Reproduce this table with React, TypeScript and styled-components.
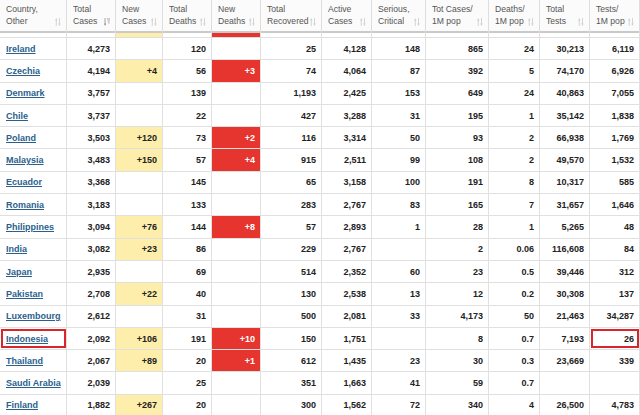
import React from "react";
import styled, { createGlobalStyle, css } from "styled-components";

const GlobalStyle = createGlobalStyle`
  html, body {
    margin: 0;
    padding: 0;
    background: #fff;
  }
  body {
    font-family: "Liberation Sans", Arial, sans-serif;
    overflow: hidden;
  }
`;

const COLUMNS = "67px 49px 47px 49px 49px 61px 50px 54px 63px 51px 50px 50px";

const Table = styled.div`
  width: 640px;
  height: 415px;
  overflow: hidden;
  display: flex;
  flex-direction: column;
`;

const HeaderRow = styled.div`
  display: grid;
  grid-template-columns: ${COLUMNS};
  height: 31px;
  background: #fbfbfb;
  border-bottom: 2px solid #c9c9c9;
  flex-shrink: 0;
`;

const HeaderCell = styled.div`
  display: flex;
  align-items: flex-end;
  justify-content: space-between;
  padding: 4px 5px 6px 6px;
  border-right: 1px solid #dedede;
  color: #555;
  font-size: 8.6px;
  line-height: 11.5px;
  box-sizing: border-box;
  min-width: 0;
`;

const HeaderText = styled.span`
  align-self: flex-start;
  white-space: pre-line;
`;

const SortIcon = styled.svg<{ $active?: boolean }>`
  width: 6px;
  height: 8px;
  flex-shrink: 0;
  margin-bottom: 1px;
  color: ${(p) => (p.$active ? "#9a9a9a" : "#d0d0d0")};
`;

const Row = styled.div<{ $short?: boolean }>`
  display: grid;
  grid-template-columns: ${COLUMNS};
  height: ${(p) => (p.$short ? "5px" : "22.3px")};
  border-bottom: 1px solid #e0e0e0;
  flex-shrink: 0;
  box-sizing: border-box;
`;

type Tone = "yellow" | "red" | undefined;

const Cell = styled.div<{ $tone?: Tone; $marked?: boolean }>`
  display: flex;
  align-items: center;
  justify-content: flex-end;
  padding-right: 5px;
  border-right: 1px solid #e0e0e0;
  font-size: 9px;
  font-weight: bold;
  color: #222;
  box-sizing: border-box;
  white-space: nowrap;
  min-width: 0;
  ${(p) =>
    p.$tone === "yellow" &&
    css`
      background: #feeeab;
    `}
  ${(p) =>
    p.$tone === "red" &&
    css`
      background: #e6352e;
      color: #fff;
    `}
  ${(p) =>
    p.$marked &&
    css`
      outline: 2px solid #d8262c;
      outline-offset: -3px;
    `}
`;

const CountryCell = styled(Cell)`
  justify-content: flex-start;
  padding: 0 0 0 6px;
`;

const CountryLink = styled.a`
  color: #2b5f8e;
  text-decoration: underline;
  font-weight: bold;
`;

const Arrows = ({ active }: { active?: boolean }) => (
  <SortIcon $active={active} viewBox="0 0 6 8">
    {active ? (
      <g fill="currentColor">
        <rect x="0.6" y="0" width="0.9" height="7" />
        <path d="M0 5.6 L2.1 5.6 L1.05 8 Z" />
        <rect x="3" y="0.5" width="3" height="0.9" />
        <rect x="3.6" y="2.5" width="2.2" height="0.9" />
        <rect x="4.2" y="4.5" width="1.4" height="0.9" />
      </g>
    ) : (
      <g fill="currentColor">
        <rect x="0.8" y="1.5" width="0.9" height="6.5" />
        <path d="M0 2.4 L1.25 0 L2.5 2.4 Z" />
        <rect x="4" y="0" width="0.9" height="6.5" />
        <path d="M3.2 5.6 L5.7 5.6 L4.45 8 Z" />
      </g>
    )}
  </SortIcon>
);

const headers = [
  "Country,\nOther",
  "Total\nCases",
  "New\nCases",
  "Total\nDeaths",
  "New\nDeaths",
  "Total\nRecovered",
  "Active\nCases",
  "Serious,\nCritical",
  "Tot Cases/\n1M pop",
  "Deaths/\n1M pop",
  "Total\nTests",
  "Tests/\n1M pop",
];

type Country = [string, ...string[]];

const rows: Country[] = [
  ["Ireland", "4,273", "", "120", "", "25", "4,128", "148", "865", "24", "30,213", "6,119"],
  ["Czechia", "4,194", "+4", "56", "+3", "74", "4,064", "87", "392", "5", "74,170", "6,926"],
  ["Denmark", "3,757", "", "139", "", "1,193", "2,425", "153", "649", "24", "40,863", "7,055"],
  ["Chile", "3,737", "", "22", "", "427", "3,288", "31", "195", "1", "35,142", "1,838"],
  ["Poland", "3,503", "+120", "73", "+2", "116", "3,314", "50", "93", "2", "66,938", "1,769"],
  ["Malaysia", "3,483", "+150", "57", "+4", "915", "2,511", "99", "108", "2", "49,570", "1,532"],
  ["Ecuador", "3,368", "", "145", "", "65", "3,158", "100", "191", "8", "10,317", "585"],
  ["Romania", "3,183", "", "133", "", "283", "2,767", "83", "165", "7", "31,657", "1,646"],
  ["Philippines", "3,094", "+76", "144", "+8", "57", "2,893", "1", "28", "1", "5,265", "48"],
  ["India", "3,082", "+23", "86", "", "229", "2,767", "", "2", "0.06", "116,608", "84"],
  ["Japan", "2,935", "", "69", "", "514", "2,352", "60", "23", "0.5", "39,446", "312"],
  ["Pakistan", "2,708", "+22", "40", "", "130", "2,538", "13", "12", "0.2", "30,308", "137"],
  ["Luxembourg", "2,612", "", "31", "", "500", "2,081", "33", "4,173", "50", "21,463", "34,287"],
  ["Indonesia", "2,092", "+106", "191", "+10", "150", "1,751", "", "8", "0.7", "7,193", "26"],
  ["Thailand", "2,067", "+89", "20", "+1", "612", "1,435", "23", "30", "0.3", "23,669", "339"],
  ["Saudi Arabia", "2,039", "", "25", "", "351", "1,663", "41", "59", "0.7", "", ""],
  ["Finland", "1,882", "+267", "20", "", "300", "1,562", "72", "340", "4", "26,500", "4,783"],
];

const toneFor = (col: number, value: string): Tone => {
  if (!value) return undefined;
  if (col === 2) return "yellow";
  if (col === 4) return "red";
  return undefined;
};

export default function App() {
  return (
    <>
      <GlobalStyle />
      <Table>
        <HeaderRow>
          {headers.map((h, i) => (
            <HeaderCell key={h}>
              <HeaderText>{h}</HeaderText>
              <Arrows active={i === 1} />
            </HeaderCell>
          ))}
        </HeaderRow>
        <Row $short>
          {headers.map((h, i) => (
            <Cell key={h} $tone={i === 2 ? "yellow" : i === 4 ? "red" : undefined} />
          ))}
        </Row>
        {rows.map(([name, ...values]) => (
          <Row key={name}>
            <CountryCell $marked={name === "Indonesia"}>
              <CountryLink href="#">{name}</CountryLink>
            </CountryCell>
            {values.map((v, i) => (
              <Cell
                key={i}
                $tone={toneFor(i + 1, v)}
                $marked={name === "Indonesia" && i === values.length - 1}
              >
                {v}
              </Cell>
            ))}
          </Row>
        ))}
      </Table>
    </>
  );
}
